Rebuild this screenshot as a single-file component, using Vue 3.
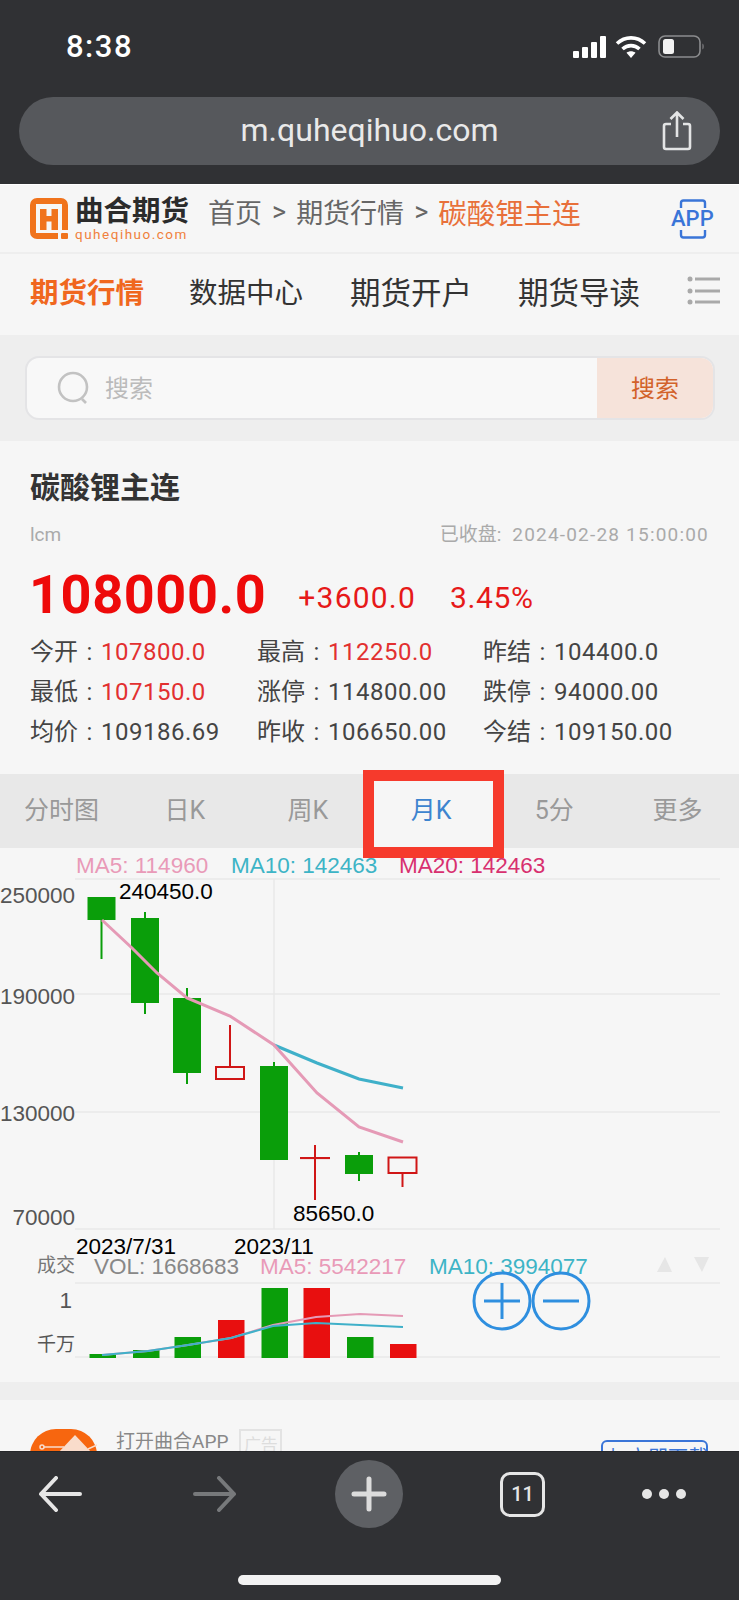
<template>
  <div class="page">
    <header class="chrome-top">
      <div class="status">
        <span class="time">8:38</span>
        <div class="status-icons">
          <svg width="34" height="22" viewBox="0 0 34 22">
            <rect x="0" y="15" width="6" height="7" rx="1" fill="#fff" />
            <rect x="9" y="11" width="6" height="11" rx="1" fill="#fff" />
            <rect x="18" y="6" width="6" height="16" rx="1" fill="#fff" />
            <rect x="27" y="0" width="6" height="22" rx="1" fill="#fff" />
          </svg>
          <svg width="32" height="24" viewBox="0 0 32 24" fill="none" stroke="#fff" stroke-width="3.6">
            <path d="M2 8.5C10 1 22 1 30 8.5" />
            <path d="M7.5 14C12.5 9.500 19.500 9.500 24.500 14" />
            <path d="M16 23l-4.500-5.200c2.700-2 6.300-2 9 0z" fill="#fff" stroke="none" />
          </svg>
          <svg class="battery" width="46" height="24" viewBox="0 0 46 24">
            <rect x="1" y="1" width="41" height="21" rx="6" fill="none" stroke="#8b8c8e" stroke-width="1.600" />
            <rect x="5" y="4" width="11" height="15" rx="2.500" fill="#f2f2f2" />
            <path d="M44.500 8.500c1.500.6 1.500 5.400 0 6z" fill="#8b8c8e" />
          </svg>
        </div>
      </div>
      <div class="url-bar">
        <span class="url">m.quheqihuo.com</span>
        <svg class="share" width="32" height="40" viewBox="0 0 32 40" fill="none" stroke="#e3e4e5" stroke-width="2.600">
          <path d="M10 13H5a2 2 0 0 0-2 2v21a2 2 0 0 0 2 2h22a2 2 0 0 0 2-2V15a2 2 0 0 0-2-2h-5" />
          <path d="M16 26V2M9.500 8L16 1.500 22.500 8" />
        </svg>
      </div>
    </header>

    <div class="topbar">
      <div class="logo">
        <svg width="38" height="42" viewBox="0 0 38 42">
          <path d="M7 0h24a7 7 0 0 1 7 7v25h-6V6H6v29h22v6H7a7 7 0 0 1-7-7V7a7 7 0 0 1 7-7z" fill="#f0731c" />
          <rect x="31" y="35" width="7" height="6" rx="1" fill="#f0731c" />
          <path d="M10 11h6.500v7h5v-7H28v21h-6.500v-8.500h-5V32H10z" fill="#f0731c" />
        </svg>
        <div class="logo-text">
          <span class="logo-name">曲合期货</span>
          <span class="logo-domain">quheqihuo.com</span>
        </div>
      </div>
      <div class="crumbs">
        <span>首页</span><i>&gt;</i><span>期货行情</span><i>&gt;</i><span class="crumb-on">碳酸锂主连</span>
      </div>
      <div class="app-badge">
        <svg width="32" height="40" viewBox="0 0 32 40" fill="none" stroke="#3a75d8" stroke-width="2.400">
          <path d="M4 9V4a2.500 2.500 0 0 1 2.500-2.500h19A2.500 2.500 0 0 1 28 4v5" />
          <path d="M4 31v5a2.500 2.500 0 0 0 2.500 2.500h19A2.500 2.500 0 0 0 28 36v-5" />
        </svg>
        <span>APP</span>
      </div>
    </div>

    <nav class="nav">
      <span v-for="(item, i) in navItems" :key="item" :class="{ on: i === 0, wide: i > 1 }">{{ item }}</span>
      <svg class="nav-more" width="34" height="30" viewBox="0 0 34 30">
        <g fill="#a9a9a9">
          <circle cx="3" cy="3" r="2.500" /><rect x="8" y="1.500" width="25" height="3" />
          <circle cx="3" cy="15" r="2.500" /><rect x="8" y="13.500" width="25" height="3" />
          <circle cx="3" cy="26" r="2.500" /><rect x="8" y="24.500" width="25" height="3" />
        </g>
      </svg>
    </nav>

    <div class="search-wrap">
      <div class="search">
        <svg width="34" height="34" viewBox="0 0 34 34" fill="none" stroke="#c2c2c2" stroke-width="2.600">
          <circle cx="16" cy="16" r="14" />
          <path d="M25 28l4 4" />
        </svg>
        <span class="search-hint">搜索</span>
        <span class="search-btn">搜索</span>
      </div>
    </div>

    <section class="quote">
      <h1 class="title">碳酸锂主连</h1>
      <div class="sub">
        <span class="code">lcm</span>
        <span>已收盘:<span class="close-time">2024-02-28 15:00:00</span></span>
      </div>
      <div class="price-row">
        <span class="price">108000.0</span>
        <span class="change">+3600.0</span>
        <span class="percent">3.45%</span>
      </div>
      <div class="stats">
        <div v-for="s in stats" :key="s.label" class="stat">
          {{ s.label }}<span class="colon">:</span><span class="val" :class="{ up: s.up }">{{ s.value }}</span>
        </div>
      </div>
    </section>

    <div class="tabs">
      <span v-for="(t, i) in tabs" :key="t" class="tab" :class="{ active: i === 3 }">{{ t }}</span>
      <div class="mark"></div>
    </div>

    <section class="chart">
      <svg width="739" height="534" viewBox="0 848 739 534">
        <g stroke="#e9e9e9" stroke-width="1.500">
          <line v-for="y in gridY" :key="y" x1="75" x2="720" :y1="y" :y2="y" />
          <line x1="274" x2="274" y1="879" y2="1229" />
        </g>

        <g class="t">
          <text x="76" y="873" fill="#e99ab8">MA5: 114960</text>
          <text x="231" y="873" fill="#3db4c6">MA10: 142463</text>
          <text x="399" y="873" fill="#d8306f">MA20: 142463</text>
          <g fill="#555" text-anchor="end">
            <text x="75" y="903">250000</text>
            <text x="75" y="1004">190000</text>
            <text x="75" y="1121">130000</text>
            <text x="75" y="1225">70000</text>
          </g>
        </g>

        <g v-for="c in candles" :key="c.x">
          <line :x1="c.x" :x2="c.x" :y1="c.hi" :y2="c.lo" :stroke="c.up ? '#d01616' : '#0a9e0a'" stroke-width="2" />
          <rect
            :x="c.x - 14"
            :y="c.top"
            width="28"
            :height="c.bottom - c.top"
            :fill="c.up ? '#f6f6f6' : '#0a9e0a'"
            :stroke="c.up ? '#d01616' : 'none'"
            :stroke-width="c.up ? 2 : 0"
          />
        </g>

        <polyline fill="none" stroke="#3fb0c9" stroke-width="3" points="274,1045 317,1063 359,1079 403,1088" />
        <polyline fill="none" stroke="#e59ab6" stroke-width="3" points="102,920 132,948 157,973 187,998 230,1016 274,1045 317,1093 359,1127 403,1142" />

        <g class="t" fill="#000">
          <text x="119" y="899">240450.0</text>
          <text x="293" y="1221">85650.0</text>
          <text x="76" y="1254">2023/7/31</text>
          <text x="234" y="1254">2023/11</text>
        </g>

        <g class="t cjk">
          <text x="37" y="1272" fill="#777">成交</text>
          <text x="37" y="1351" fill="#555">千万</text>
        </g>
        <g class="t">
          <text x="94" y="1274" fill="#888">VOL: 1668683</text>
          <text x="260" y="1274" fill="#e99ab8">MA5: 5542217</text>
          <text x="429" y="1274" fill="#3db4c6">MA10: 3994077</text>
          <text x="72" y="1308" fill="#555" text-anchor="end">1</text>
        </g>
        <path d="M665 1257l7 15h-15zM702 1272l7-15h-15z" fill="#e6e6e6" />

        <rect
          v-for="b in bars"
          :key="b.x"
          :x="b.x"
          :y="b.top"
          width="26.500"
          :height="1358 - b.top"
          :fill="b.up ? '#e80f0f' : '#0a9e0a'"
        />
        <polyline fill="none" stroke="#e59ab6" stroke-width="2" points="102,1355 148,1351 188,1345 231,1338 273,1325 316,1317 360,1314 403,1316" />
        <polyline fill="none" stroke="#3fb0c9" stroke-width="2" points="102,1355 148,1351 188,1345 231,1338 273,1326 316,1323 360,1325 403,1327" />

        <g fill="none" stroke="#2f8fdf" stroke-width="3">
          <circle cx="502" cy="1301" r="28" />
          <circle cx="561" cy="1301" r="28" />
          <path d="M484 1301h36M502 1283v36M543 1301h36" />
        </g>
      </svg>
    </section>

    <div class="gap"></div>

    <div class="ad">
      <svg class="ad-icon" width="67" height="67" viewBox="0 0 67 67">
        <rect width="67" height="67" rx="26" fill="#f7660f" />
        <path d="M45 6L62 24H28z" fill="#f9dccb" />
        <circle cx="12" cy="18" r="2" fill="none" stroke="#f9dccb" stroke-width="1.500" />
        <path d="M14 18h20M58 20l9-4" stroke="#f9dccb" stroke-width="1.500" fill="none" />
      </svg>
      <span class="ad-name">打开曲合APP</span>
      <span class="ad-tag">广告</span>
      <span class="ad-btn">↓ 立即下载</span>
    </div>

    <footer class="chrome-bottom">
      <div class="toolbar">
        <svg width="44" height="36" viewBox="0 0 44 36" fill="none" stroke="#e6e6e6" stroke-width="4" stroke-linecap="round" stroke-linejoin="round">
          <path d="M42 18H3M18 2L3 18l15 16" />
        </svg>
        <svg width="44" height="36" viewBox="0 0 44 36" fill="none" stroke="#77797b" stroke-width="4" stroke-linecap="round" stroke-linejoin="round">
          <path d="M2 18h39M26 2l15 16-15 16" />
        </svg>
        <div class="new-tab">
          <svg width="36" height="36" viewBox="0 0 36 36" stroke="#dcdcdc" stroke-width="5" stroke-linecap="round">
            <path d="M18 3v30M3 18h30" />
          </svg>
        </div>
        <div class="tab-count">11</div>
        <div class="dots"><i></i><i></i><i></i></div>
      </div>
      <div class="home-bar"></div>
    </footer>
  </div>
</template>

<script setup>
const navItems = ['期货行情', '数据中心', '期货开户', '期货导读']
const tabs = ['分时图', '日K', '周K', '月K', '5分', '更多']

const stats = [
  { label: '今开', value: '107800.0', up: true },
  { label: '最高', value: '112250.0', up: true },
  { label: '昨结', value: '104400.0' },
  { label: '最低', value: '107150.0', up: true },
  { label: '涨停', value: '114800.00' },
  { label: '跌停', value: '94000.00' },
  { label: '均价', value: '109186.69' },
  { label: '昨收', value: '106650.00' },
  { label: '今结', value: '109150.00' }
]

const gridY = [879, 994, 1112, 1229, 1283, 1357]

const candles = [
  { x: 101.5, hi: 897, lo: 959, top: 897, bottom: 920 },
  { x: 145, hi: 912, lo: 1014, top: 918, bottom: 1003 },
  { x: 187, hi: 988, lo: 1084, top: 998, bottom: 1073 },
  { x: 230, hi: 1025, lo: 1078, top: 1067, bottom: 1079, up: true },
  { x: 274, hi: 1062, lo: 1160, top: 1066, bottom: 1160 },
  { x: 315, hi: 1145, lo: 1200, top: 1158, bottom: 1158.1, up: true },
  { x: 359, hi: 1152, lo: 1181, top: 1155, bottom: 1174 },
  { x: 402.5, hi: 1157, lo: 1187, top: 1157.5, bottom: 1173, up: true }
]

const bars = [
  { x: 89.5, top: 1354 },
  { x: 133, top: 1350 },
  { x: 174.5, top: 1337 },
  { x: 218, top: 1320, up: true },
  { x: 261.5, top: 1288 },
  { x: 303.5, top: 1288, up: true },
  { x: 347, top: 1337 },
  { x: 390, top: 1344, up: true }
]
</script>

<style>
html, body {
  background: #303134;
}
</style>

<style scoped>
.page {
  width: 739px;
  height: 1600px;
  overflow: hidden;
  background: #f6f6f6;
  font-family: Roboto, "Noto Sans CJK SC", sans-serif;
  color: #333;
}

.chrome-top {
  height: 185px;
  background: #303134;
  border-bottom: 1px solid #fff;
  box-sizing: border-box;
}
.status {
  height: 97px;
  display: flex;
  justify-content: space-between;
  align-items: flex-start;
  padding: 29px 35px 0 66px;
  box-sizing: border-box;
}
.time {
  font-size: 31px;
  line-height: 36px;
  letter-spacing: 1.500px;
  font-weight: 500;
  color: #fff;
}
.status-icons {
  display: flex;
  align-items: center;
  gap: 8px;
  padding-top: 6px;
}
.battery {
  margin-left: 3px;
}
.url-bar {
  position: relative;
  margin: 0 19px;
  height: 68px;
  border-radius: 34px;
  background: #56585c;
  display: flex;
  align-items: center;
  justify-content: center;
}
.url {
  font-size: 32px;
  margin-top: -2px;
  color: #e9e9e9;
  font-family: Roboto, sans-serif;
}
.share {
  position: absolute;
  right: 27px;
  top: 14px;
}

.topbar {
  height: 69px;
  box-sizing: border-box;
  display: flex;
  align-items: center;
  padding: 0 24px 0 30px;
  border-bottom: 2px solid #eee;
}
.logo {
  width: 178px;
  display: flex;
  align-items: center;
  gap: 7px;
}
.logo-text {
  display: flex;
  flex-direction: column;
}
.logo-name {
  font-size: 28.500px;
  line-height: 30px;
  font-weight: 700;
  color: #2b2b2b;
  white-space: nowrap;
}
.logo-domain {
  font-size: 13.500px;
  line-height: 14px;
  letter-spacing: 1.500px;
  color: #f0803c;
}
.crumbs {
  margin-bottom: 14px;
  font-size: 27px;
  color: #666;
  display: flex;
  align-items: center;
  white-space: nowrap;
}
.crumbs i {
  font-style: normal;
  margin: 0 10px;
}
.crumb-on {
  font-size: 28.500px;
  color: #e8703a;
}
.app-badge {
  position: relative;
  margin-left: auto;
  width: 44px;
  height: 40px;
  display: flex;
  justify-content: center;
}
.app-badge span {
  position: absolute;
  top: 7px;
  left: 0;
  font-size: 22px;
  font-weight: 500;
  line-height: 26px;
  color: #3a75d8;
}

.nav {
  height: 81px;
  box-sizing: border-box;
  display: grid;
  grid-template-columns: 159px 161px 168px 1fr auto;
  align-items: center;
  padding: 0 18px 8px 30px;
  font-size: 28.500px;
  color: #333;
  white-space: nowrap;
}
.nav .wide {
  font-size: 30.500px;
}
.nav .on {
  color: #f0671e;
  font-weight: 700;
}

.search-wrap {
  height: 106px;
  background: #eee;
  padding: 21px 24px 0 25px;
  box-sizing: border-box;
}
.search {
  height: 64px;
  border: 2px solid #e4e4e6;
  border-radius: 14px;
  background: #f8f8f8;
  box-sizing: border-box;
  display: flex;
  align-items: center;
  padding-left: 30px;
  overflow: hidden;
  font-size: 24px;
}
.search-hint {
  margin-left: 14px;
  margin-bottom: 4px;
  color: #bbb;
}
.search-btn {
  margin-left: auto;
  width: 116px;
  height: 100%;
  padding-bottom: 4px;
  box-sizing: border-box;
  background: #f6e3da;
  color: #d2622a;
  display: flex;
  align-items: center;
  justify-content: center;
}

.quote {
  height: 333px;
  padding: 0 30px;
  box-sizing: border-box;
}
.title {
  margin: 0;
  padding-top: 27px;
  font-size: 30px;
  line-height: 40px;
  font-weight: 700;
  color: #333;
}
.sub {
  margin-top: 15px;
  display: flex;
  justify-content: space-between;
  font-size: 19px;
  line-height: 24px;
  color: #aaa;
}
.close-time {
  margin-left: 11px;
  letter-spacing: 1.200px;
}
.price-row {
  margin-top: 18px;
  height: 60px;
  display: flex;
  align-items: center;
  color: #e61919;
}
.price {
  margin-left: -1px;
  margin-right: 32px;
  font-size: 54px;
  letter-spacing: 0.6px;
  line-height: 60px;
  font-weight: 700;
  color: #ee0a0a;
}
.change {
  margin-top: 4px;
  margin-right: 34px;
  font-size: 30px;
  letter-spacing: 1.200px;
}
.percent {
  margin-top: 4px;
  font-size: 30px;
  letter-spacing: 0.600px;
}
.stats {
  margin-top: 7px;
  display: grid;
  grid-template-columns: 227px 226px 1fr;
  font-size: 24px;
  line-height: 40px;
  color: #444;
  white-space: nowrap;
}
.colon {
  display: inline-block;
  width: 23px;
  text-align: center;
}
.val {
  letter-spacing: 0.500px;
}
.up {
  color: #e23030;
}

.tabs {
  position: relative;
  height: 74px;
  display: flex;
  background: #e8e8e8;
}
.tab {
  flex: 1;
  display: flex;
  align-items: center;
  justify-content: center;
  padding-bottom: 7px;
  font-size: 25px;
  color: #999;
}
.tab.active {
  background: #f6f6f6;
  color: #3d84cf;
}
.mark {
  position: absolute;
  left: 363px;
  top: -4px;
  width: 141px;
  height: 88px;
  box-sizing: border-box;
  border: 11px solid #f63a2c;
  z-index: 2;
}

.chart {
  height: 534px;
}
.chart svg {
  display: block;
}
.t {
  font-family: "Liberation Sans", sans-serif;
  font-size: 22.500px;
}
.cjk {
  font-family: "Noto Sans CJK SC", sans-serif;
  font-size: 19px;
}

.gap {
  height: 18px;
  background: #eee;
}

.ad {
  height: 51px;
  overflow: hidden;
  position: relative;
  display: flex;
  align-items: flex-start;
  padding: 29px 31px 0 30px;
  box-sizing: border-box;
}
.ad-icon {
  flex-shrink: 0;
}
.ad-name {
  margin-left: 19px;
  font-size: 19px;
  line-height: 26px;
  color: #888;
  white-space: nowrap;
}
.ad-tag {
  margin-left: 11px;
  width: 43px;
  height: 30px;
  flex-shrink: 0;
  box-sizing: border-box;
  border: 2px solid #e3e3e3;
  color: #ddd;
  font-size: 17px;
  line-height: 28px;
  text-align: center;
}
.ad-btn {
  margin-left: auto;
  margin-top: 11px;
  width: 107px;
  height: 40px;
  box-sizing: border-box;
  border: 2px solid #3a75d8;
  border-radius: 6px;
  color: #3a75d8;
  font-size: 20px;
  line-height: 32px;
  text-align: center;
  white-space: nowrap;
}

.chrome-bottom {
  height: 149px;
  background: #303134;
  border-top: 1px solid #26272a;
  box-sizing: border-box;
}
.toolbar {
  height: 84px;
  padding: 0 0 0 38px;
  display: flex;
  align-items: center;
  box-sizing: border-box;
}
.toolbar > svg:nth-child(2) {
  margin-left: 111px;
}
.new-tab {
  margin-left: 98px;
  width: 68px;
  height: 68px;
  border-radius: 50%;
  background: #5e6064;
  display: flex;
  align-items: center;
  justify-content: center;
}
.tab-count {
  margin-left: 97px;
  width: 45px;
  height: 45px;
  box-sizing: border-box;
  border: 3.500px solid #e6e6e6;
  border-radius: 10px;
  color: #e6e6e6;
  font-size: 20px;
  font-weight: 500;
  display: flex;
  align-items: center;
  justify-content: center;
}
.dots {
  margin-left: 97px;
  display: flex;
  gap: 7px;
}
.dots i {
  width: 10px;
  height: 10px;
  border-radius: 50%;
  background: #e6e6e6;
}
.home-bar {
  margin: 39px 0 0 238px;
  width: 263px;
  height: 10px;
  border-radius: 5px;
  background: #f2f2f2;
}
</style>
